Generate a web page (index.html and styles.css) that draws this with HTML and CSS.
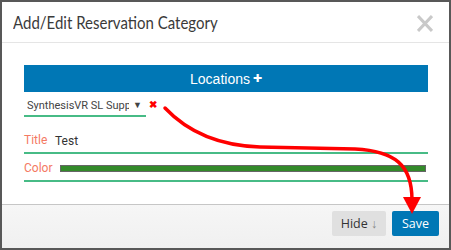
FILE: index.html
```html
<!DOCTYPE html>
<html lang="en">
<head>
  <meta charset="UTF-8">
  <meta name="viewport" content="width=device-width, initial-scale=1">
  <title>Add/Edit Reservation Category</title>
  <link rel="stylesheet" href="styles.css">
</head>
<body>

  <div class="modal">
    <div class="modal-header">
      <h3>Add/Edit Reservation Category</h3>
      <span class="close">
        <svg width="16" height="17" viewBox="0 0 16 17"><path d="M1 1 L15 16 M15 1 L1 16" stroke="#c9c9c9" stroke-width="3"/></svg>
      </span>
    </div>

    <div class="modal-body">
      <div class="locations-bar">Locations <span class="plus">&#10010;</span></div>

      <div class="location-row">
        <div class="fake-select">
          <span class="select-text">SynthesisVR SL Support</span>
          <span class="caret">&#9660;</span>
        </div>
        <span class="remove">&#10006;</span>
      </div>

      <div class="field-row">
        <label>Title</label>
        <span class="field-value">Test</span>
      </div>
      <div class="field-row">
        <label>Color</label>
        <div class="color-bar"></div>
      </div>
    </div>

    <div class="modal-footer">
      <button type="button" class="btn btn-hide">Hide <span class="arrow-down">&#8595;</span></button>
      <button type="button" class="btn btn-save">Save</button>
    </div>

    <!-- annotation arrow drawn over the dialog -->
    <svg class="annotation" width="451" height="250" viewBox="0 0 451 250">
      <path d="M165 108 Q200 145 260 147 L355 149 C395 151 412 165 412 200" fill="none" stroke="#ff0000" stroke-width="3.5" stroke-linecap="round"/>
      <polygon points="403,197 421,197 412,214" fill="#ff0000"/>
    </svg>
  </div>

</body>
</html>
```

FILE: styles.css
```css
html, body {
  margin: 0;
  padding: 0;
  background: #fff;
}
.modal {
  position: relative;
  box-sizing: border-box;
  width: 451px;
  height: 250px;
  border: 2px solid #585858;
  background: #fff;
  display: flex;
  flex-direction: column;
  font-family: Roboto, "Liberation Sans", sans-serif;
}
.modal-header {
  height: 40px;
  border-bottom: 1px solid #e5e5e5;
  display: flex;
  align-items: center;
  justify-content: space-between;
  padding: 0 16px 0 11px;
}
.modal-header h3 {
  margin: 0;
  font-family: Lato, sans-serif;
  font-weight: normal;
  font-size: 15px;
  color: #3a3a3a;
  transform: scaleY(1.1);
}
.close {
  display: flex;
  margin-top: 2px;
}
.modal-body {
  flex: 1;
  padding: 22px 21px 0 22px;
}
.locations-bar {
  height: 27px;
  background: #0077b5;
  color: #fff;
  font-family: "Liberation Sans", Arial, sans-serif;
  font-size: 14px;
  display: flex;
  align-items: center;
  justify-content: center;
}
.plus {
  font-size: 11px;
  margin-left: 3px;
}
.location-row {
  display: flex;
  align-items: center;
  margin-top: 3px;
}
.fake-select {
  width: 122px;
  height: 20px;
  border-bottom: 2px solid #47bb86;
  display: flex;
  align-items: center;
  font-size: 11px;
  color: #444;
}
.select-text {
  width: 102px;
  margin-left: 3px;
  overflow: hidden;
  white-space: nowrap;
}
.caret {
  font-size: 9px;
  color: #444;
  margin-left: 4px;
}
.remove {
  color: #ff0000;
  font-size: 10px;
  font-weight: bold;
  margin-left: 3px;
  margin-top: -4px;
}
.field-row {
  height: 28px;
  border-bottom: 2px solid #47bb86;
  display: flex;
  align-items: center;
  padding-top: 2px;
  box-sizing: border-box;
}
.location-row + .field-row {
  margin-top: 9px;
}
.field-row label {
  color: #f47a63;
  font-size: 12px;
  width: 31px;
}
.field-row .field-value {
  font-size: 12px;
  color: #333;
  margin-top: 2px;
}
.color-bar {
  flex: 1;
  height: 5px;
  margin-left: 5px;
  margin-right: 2px;
  background: #338a2a;
  border: 1px solid #666;
}
.modal-footer {
  height: 37px;
  border-top: 1px solid #c6c6c6;
  background: linear-gradient(#f6f6f6, #f0f0f0);
  display: flex;
  justify-content: flex-end;
  align-items: flex-start;
  gap: 6px;
  padding: 6px 10px 0 0;
}
.btn {
  height: 25px;
  border: none;
  border-radius: 2px;
  font-family: "Open Sans", sans-serif;
  font-size: 12.5px;
  padding: 0;
  cursor: pointer;
}
.btn-hide {
  width: 54px;
  background: #e0e0e0;
  color: #333;
}
.arrow-down {
  color: #888;
}
.btn-save {
  width: 47px;
  background: #0077b5;
  color: #fff;
}
.annotation {
  position: absolute;
  left: -2px;
  top: -2px;
  pointer-events: none;
}
```
